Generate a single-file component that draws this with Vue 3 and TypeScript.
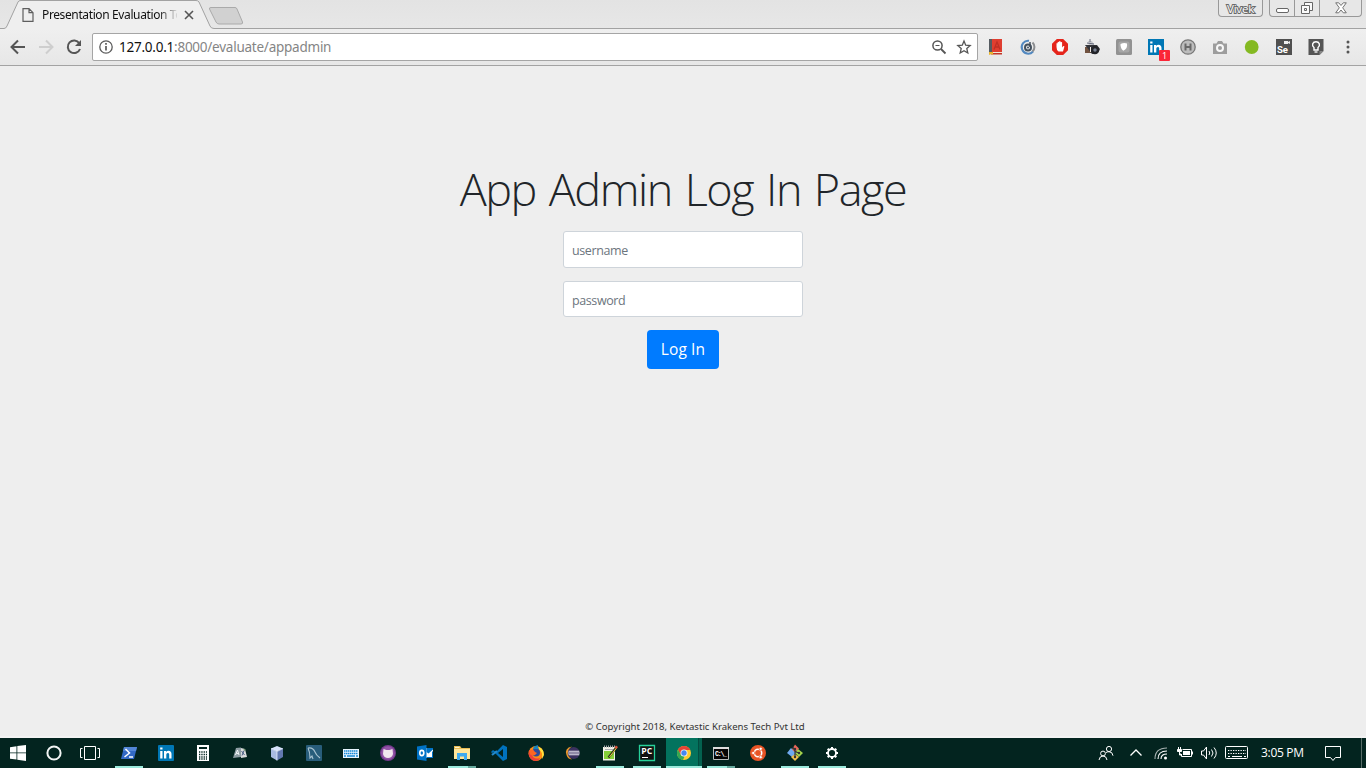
<script setup lang="ts">
import { ref } from 'vue'

interface Item {
  name: string
  art: string
  state?: 'open' | 'multi' | 'active'
}

const username = ref('')
const password = ref('')

const extensions: Item[] = [
  { name: 'Dictionary', art: '<path fill="#555b60" d="M1 0h3v14H1z"/><path fill="#df3e30" d="M4 0h10v13H4z"/><path d="M6 10.500 9 3l3 7.500M7 8h4" fill="none" stroke="#bf2f24" stroke-width="1.300"/><path fill="#f0e7d8" d="M3 13h11v1H3z"/><path fill="#c03528" d="M3 14h11v1.500H3z"/><path fill="#eab52c" d="M1 13h4v3l-1.500-1L1 16z"/>' },
  { name: 'Orbit', art: '<path d="M9 1.700A6.500 6.500 0 1 0 13 12.500" fill="none" stroke="#5288bf" stroke-width="2"/><path d="M12.500 3.500a6.200 6.200 0 0 1 0 9" fill="none" stroke="#8b8d90" stroke-width="2"/><circle cx="8" cy="8.500" r="3" fill="#e8eaee" stroke="#44515e" stroke-width="2"/><circle cx="8" cy="8.500" r="1" fill="#44515e"/><path d="M10 3v5" stroke="#44515e" stroke-width="1.500"/>' },
  { name: 'Blocker', art: '<path fill="#e5251b" d="M4.800 0h6.400L16 4.800v6.400L11.200 16H4.800L0 11.200V4.800z"/><path fill="#fff" d="M4.500 8V4.500q.5-.8 1.100 0V3.200q.8-.8 1.500 0V2.500q.7-.8 1.500 0v.8q.8-.8 1.500 0V8.500l1-1.300q1-.7 1.300.2L11 12.500H6.500q-2-1-2-4.500z"/>' },
  { name: 'Binoculars', art: '<path fill="#c6c7cb" d="M4 2h4l3 5H5z"/><path fill="#725340" d="M1 8h6v6H1z"/><path fill="#33343a" d="M1 6h6l6 0 3 4-2 4-6 1z"/><circle cx="11" cy="11" r="4.200" fill="#232429"/><circle cx="11" cy="11" r="1.700" fill="#788092"/><path d="M6 0v3M3 4l7 1" stroke="#666b7e"/><path fill="#f0e9e4" d="M6 8h1v5H6z"/>' },
  { name: 'Shield', art: '<rect width="16" height="16" rx="1.500" fill="#929292"/><rect x="2.500" y="2.500" width="11" height="11" rx="2" fill="#a6a6a6"/><path d="M4.500 5Q8 3.500 11 4.500q.8 5.500-3.700 7.200Q4.300 9.500 4.500 5z" fill="#fff"/>' },
  { name: 'LinkedIn', art: '<path fill="#0077b5" d="M0 0h16v16H0z"/><path fill="#fff" d="M2.200 6h2.300v7.500H2.200zM2.200 2.500h2.300v2H2.200zM6 6h2.200v1Q9 5.800 10.500 5.800 13.500 6 13.500 9v4.500h-2.300V9.300Q11 7.900 9.800 7.900 8.300 8 8.300 9.500v4H6z"/>' },
  { name: 'H', art: '<circle cx="8" cy="8" r="7.200" fill="#bcbcbc" stroke="#777" stroke-width="1.300"/><path d="M5.500 4.500v7M10.500 4.500v7M5 8h6" stroke="#686868" stroke-width="2"/>' },
  { name: 'Camera', art: '<path fill="#9d9d9d" d="M1 4.500h3.500L6 2h4l1.500 2.500H15V15H1z"/><circle cx="8" cy="9" r="3" fill="#9d9d9d" stroke="#f8f8f8" stroke-width="2"/>' },
  { name: 'Green', art: '<circle cx="7.700" cy="8" r="6.900" fill="#84b922"/>' },
  { name: 'Selenium', art: '<path fill="#505050" d="M0 0h16v16H0z"/><path fill="#eee" d="M8 2h4v3H8zM12 3l2-1v3l-2-1z"/><text x="1" y="14" font-size="9.500" font-family="Roboto" font-weight="700" fill="#fff">Se</text>' },
  { name: 'Bulb', art: '<path fill="#555" d="M.500 0h15v12l-4 4H.500z"/><path fill="#888" d="M11.500 12h4l-4 4z"/><path d="M6 8.500Q4 7 4.700 4.700 5.500 2.700 8 2.700q2.500 0 3.300 2Q12 7 10 8.500V11H6z" fill="#555" stroke="#fff" stroke-width="1.400"/><path d="M6.500 13h3" stroke="#fff" stroke-width="1.300"/>' },
]

const system: Item[] = [
  { name: 'Start', art: '<path fill="#fff" d="M0 2.200 6.500 1.300v6.200H0zM7.300 1.100 16 0v7.500H7.300zM0 8.300h6.500v6.300L0 13.700zM7.300 8.300H16V16l-8.700-1.200z"/>' },
  { name: 'Cortana', art: '<circle cx="8" cy="8" r="6.600" fill="none" stroke="#f2f5f4" stroke-width="2"/>' },
  { name: 'Task View', art: '<path d="M2.500 1.500h11v13h-11zM.500 3.500h-2v9h2M15.500 3.500h2v9h-2" fill="none" stroke="#fff"/>' },
]

const apps: Item[] = [
  { name: 'PowerShell', state: 'open', art: '<path fill="#3269c5" d="M3 2h13l-3 12H0z"/><path fill="#5386d7" d="M3 2h13l-1 4H2z"/><path d="m4.500 4 4 4-5 4M8 12h4" fill="none" stroke="#fff" stroke-width="1.500"/>' },
  { name: 'LinkedIn', art: '<rect width="16" height="16" rx="1" fill="#0077b5"/><path fill="#fff" d="M2.200 6h2.300v7.500H2.200zM2.200 2.500h2.300v2H2.200zM6 6h2.200v1Q9 5.800 10.500 5.800 13.500 6 13.500 9v4.500h-2.300V9.300Q11 7.900 9.800 7.900 8.300 8 8.300 9.500v4H6z"/>' },
  { name: 'Calculator', art: '<path fill="#fff" d="M2 0h12v16H2z"/><path fill="#03241f" d="M4 2h8v2H4z"/><path d="M4 7h8M4 9.500h8M4 12h8M4 14h8" stroke="#03241f" stroke-width="1.300" stroke-dasharray="1.300 1"/>' },
  { name: 'Translator', art: '<path fill="#8f9ea4" d="m4 3 5-.500V12l-8 1z"/><path fill="#d9dbdc" d="m9 3 4 1 2 8-6 1z"/><path d="m3.500 10 2-5 1.500 5M4.500 8.500h2" fill="none" stroke="#f3f6f8"/><path d="M9.500 6l3 4M12 5.500l-2 5" fill="none" stroke="#4b5f85"/><path fill="#709469" d="m11 3.500 2.500 1-.5 2z"/>' },
  { name: 'VirtualBox', art: '<path fill="#d7e3fb" d="m8 1 6 2.500-6 3-6-3z"/><path fill="#a9bbe2" d="m2 3.500 6 3v9l-6-3.500z"/><path fill="#6279b0" d="m14 3.500-6 3v9l6-3.500z"/><path d="m2 3.500 6 3 6-3M8 6.500v9" fill="none" stroke="#e7efff" stroke-width=".8"/>' },
  { name: 'MySQL', art: '<rect width="16" height="16" rx="1" fill="#285d7b"/><path d="M2 3q5-1 7 4 1 3 5 6M2 3q2 4 2 10l2-2 1 3" fill="none" stroke="#aac4d2" stroke-width="1.100"/>' },
  { name: 'Keyboard', art: '<path fill="#e8f5ff" d="M0 4h16v9H0z"/><path stroke="#1689d8" stroke-width="1.600" stroke-dasharray="1.500 .5" d="M1 6h14M1 8.500h14"/><path stroke="#1689d8" stroke-width="1.500" d="M1 11h2M4 11h8M13 11h2"/>' },
  { name: 'GitHub', art: '<circle cx="8" cy="8" r="8" fill="#74398d"/><circle cx="8" cy="8" r="6.800" fill="#9253a7"/><path d="m3.500 4 3 1h3l3-1 .5 5q-1 4-5 4T3 9z" fill="#f1e7ef"/>' },
  { name: 'Outlook', art: '<path fill="#fff" d="M9 3h7v10H9z"/><path fill="#0072c6" d="M0 1.500 9.500 0v16L0 14.500z"/><path fill="#0072c6" d="M9.500 3H16v1.500l-4.500 4-2-1.500zM9.500 12H15V7l1-1v7H9.500z"/><ellipse cx="4.800" cy="8" rx="2" ry="2.600" fill="none" stroke="#fff" stroke-width="1.600"/>' },
  { name: 'Explorer', state: 'multi', art: '<path fill="#e9bd55" d="M0 1h6l1.500 2H16v10H0z"/><path fill="#ffe69a" d="M0 4h16v10H0z"/><path fill="#3eaaf0" d="M3 8h10v7h-3v-3.500H6V15H3z"/><path fill="#fff5cb" d="M1 2h4.500v1H1z"/>' },
  { name: 'VS Code', art: '<path fill="#0072bd" d="m12 0 4 2v12l-4 2-9-9-2 1-1-1 2-2 3 2zM12 4 7 8l5 4z" fill-rule="evenodd"/><path d="m1 10 5-4" stroke="#2489ca" stroke-width="2.200"/>' },
  { name: 'Firefox', art: '<circle cx="8" cy="8.500" r="7.500" fill="#ff8b16"/><path fill="#ef3f39" d="M1 5q-2 9 6 11 4 0 5-3-6 2-8-3l-1-4z"/><path fill="#ffe23d" d="M11 2q5 2 5 8l-2 4q1-8-4-10z"/><circle cx="8" cy="7.500" r="4" fill="#304b99"/><path d="M1 6q4-3 6 1l2 1-2 2q-5 2-6-4" fill="#ff6523"/><path d="M5 4q0-3 5-4-1 2 1 4z" fill="#1685bd"/>' },
  { name: 'Eclipse', art: '<circle cx="8.700" cy="8" r="6" fill="#3b315f"/><path d="M7 1.500Q-1 3 1.500 10q1 4 5.500 4.500Q2 11 2.800 7.500 3 4 7 1.500" fill="#ef982d"/><path d="M3.500 6.200h10.800M3 8h11.700M3.500 9.800h10.800" stroke="#e8e5f0" stroke-width="1.100"/>' },
  { name: 'Notepad++', state: 'open', art: '<path fill="#f2f3e7" d="M1 2h12v13.500H1z"/><path d="M2 1.500h11" stroke="#a2a3aa" stroke-width="2" stroke-dasharray="1 1"/><path d="M3 4.500h8" stroke="#a9adb2"/><path fill="#85cf38" d="M2 6h10v8H2z"/><path d="m6.500 12.500 7-9" stroke="#31391c" stroke-width="2.200"/><path d="m7.500 12 7-9" stroke="#ebcf47"/><path d="m12.500 2.500 1.500-2 2 1.500-1.500 2z" fill="#d85338"/>' },
  { name: 'PyCharm', state: 'open', art: '<path d="M.500.500h15v15H.500z" fill="#111" stroke="#27d29a" stroke-width="1.300"/><text x="2.300" y="8.900" font-family="Open Sans" font-size="8.500" font-weight="700" fill="#fff" textLength="11" lengthAdjust="spacingAndGlyphs">PC</text><path stroke="#fff" d="M3 12.500h6"/>' },
  { name: 'Chrome', state: 'active', art: '<circle cx="8" cy="8" r="7" fill="#ffca2d"/><path fill="#e84335" d="M1.900 4.500Q4 1 8 1q4.500 0 6.300 4H8L4.700 9.900z"/><path fill="#34a853" d="M1.900 4.500 5 10l3.500 1.400L7 15q-5.500-.7-6-6.500 0-2 .9-4z"/><circle cx="8" cy="8" r="3.500" fill="#f5f5f2"/><circle cx="8" cy="8" r="2.700" fill="#4587ef"/>' },
  { name: 'Command Prompt', state: 'multi', art: '<path fill="#050505" stroke="#b9bdbc" d="M.500 2.500h15v12H.500z"/><path stroke="#ddd" stroke-width="2" d="M0 3h16"/><text x="2" y="11" font-family="Liberation Mono" font-size="6.500" font-weight="700" fill="#fff" textLength="12">C:\\_</text>' },
  { name: 'Ubuntu', art: '<circle cx="8" cy="8" r="8" fill="#e95425"/><circle cx="8" cy="8" r="3.700" fill="none" stroke="#fff" stroke-width="1.600"/><g fill="#fff" stroke="#e95425" stroke-width=".7"><circle cx="3.200" cy="8" r="1.600"/><circle cx="10.700" cy="3.800" r="1.600"/><circle cx="10.700" cy="12.200" r="1.600"/></g>' },
  { name: 'Git', state: 'open', art: '<path fill="#70a9ef" d="m4 3 5 5-4 4-5-4z"/><path fill="#e8675b" d="m8-.500 4 4-4 4-3-3z"/><path fill="#a5d34c" d="m11 4 5 4-4 4-4-4z"/><path fill="#f1bf4d" d="m8 9 4 3-4 4-4-4z"/><path d="M6 2q1 5 6 6M8 5v8" fill="none" stroke="#31383c" stroke-width="1.200"/><circle cx="8" cy="4" r="1.200" fill="#333"/><circle cx="12" cy="8" r="1.200" fill="#333"/><circle cx="8" cy="12" r="1.200" fill="#333"/>' },
  { name: 'Settings', state: 'open', art: '<circle cx="8" cy="8" r="4" fill="none" stroke="#fff" stroke-width="1.800"/><path d="M8 4V2M8 12v2M4 8H2M12 8h2M5.200 5.200 3.700 3.700M10.800 10.800l1.500 1.500M10.800 5.200l1.500-1.500M5.200 10.800l-1.500 1.500" stroke="#fff" stroke-width="2"/>' },
]

const tray: Item[] = [
  { name: 'People', art: '<circle cx="11" cy="4" r="2.600"/><circle cx="5" cy="8.500" r="2.400"/><path d="M1 15q.500-4 4-4t4 4M8 7.500Q9.500 6.700 11 6.700q3.500 0 4 4"/>' },
  { name: 'Show hidden icons', art: '<path stroke-width="1.300" d="m2.500 10.500 5.500-5.500 5.500 5.500"/>' },
  { name: 'Network', art: '<g stroke-width="1.100"><path d="M2 14Q2 3 14 3" opacity=".65"/><path d="M5 14Q5 6 14 6"/><path d="M8 14q0-5 6-5"/></g><circle cx="12.500" cy="13" r="1.500" fill="#fff" stroke="none"/>' },
  { name: 'Battery', art: '<path d="M5.500 4.500h9v7h-10V9M15.500 6.500v3"/><path fill="#fff" stroke="none" d="M6 6h7v4H6z"/><path fill="#fff" d="M.500 4.500h4v2h-4zM1.500 2v2M3.500 2v2M2.500 7v3h2"/>' },
  { name: 'Volume', art: '<path d="M.500 6h2l3-4v12l-3-4h-2zM8 6q1.500 2 0 4M10.500 4.500q3 3.500 0 7M13 2.500q4.500 5.500 0 11"/>' },
]
</script>

<template>
  <div class="screen">
    <header class="tabstrip">
      <svg class="tab-lines" width="1366" height="29" viewBox="0 0 1366 29" fill="none" aria-hidden="true">
        <path d="M0 29V28.500H4Q6 28.500 7 26L18 2Q18.500.500 21 .500H196Q198 .500 199 2L210 26Q211 28.500 214 28.500H1366V29z" fill="#efefef" />
        <path d="M0 28.500H4Q6 28.500 7 26L18 2Q18.500.500 21 .500H196Q198 .500 199 2L210 26Q211 28.500 214 28.500H1366" stroke="#a2a2a2" />
        <path d="M211 7.500H235Q236.500 7.500 237 9L242.500 22Q243 24 241 24H219Q217 24 216 22L209.500 9Q209 7.500 211 7.500z" fill="#d1d1d1" stroke="#aaa" />
      </svg>
      <div class="tab">
        <svg class="page-icon" width="12" height="14" viewBox="0 0 12 14" fill="none" stroke="#5e5e5e" stroke-width="1.200"><path d="M1 .700h6l4 4v8.600H1zM7 .700v4h4" /></svg>
        <span class="tab-title">Presentation Evaluation Tool</span>
        <svg width="10" height="10" viewBox="0 0 10 10" stroke="#555" stroke-width="1.600"><path d="m1 1 8 8M9 1 1 9" /></svg>
      </div>
      <div class="window-controls">
        <div class="profile">Vivek</div>
        <div class="buttons">
          <span><svg width="13" height="8" viewBox="0 0 13 8"><rect x=".500" y="2.500" width="12" height="4" rx="1.500" fill="#fff" stroke="#666" /></svg></span>
          <span><svg width="14" height="14" viewBox="0 0 14 14" fill="#fafafa" stroke="#666"><path d="M4.500 1.500h8v8h-8z" /><path d="M1.500 4.500h8v8h-8z" /><path d="M4.500 7.500h2v2h-2z" /></svg></span>
          <span><svg width="12" height="12" viewBox="0 0 12 12" fill="#fff" stroke="#737373"><path d="M.700.800h3L6 3.500 8.300.800h3L7.700 5.800l3.600 5h-3L6 8l-2.300 2.800h-3l3.600-5z" /></svg></span>
        </div>
      </div>
    </header>

    <nav class="toolbar">
      <svg class="nav-icon" viewBox="0 0 16 16" fill="none" stroke="#555" stroke-width="2"><path d="M15 8H2M8 1.500 1.500 8 8 14.500" /></svg>
      <svg class="nav-icon" viewBox="0 0 16 16" fill="none" stroke="#cecece" stroke-width="2"><path d="M1 8h13M8 1.500 14.500 8 8 14.500" /></svg>
      <svg class="nav-icon reload" viewBox="0 0 16 16" fill="none" stroke="#555" stroke-width="2"><path d="M13.300 4.200A6.300 6.300 0 1 0 14 10" /><path fill="#555" stroke="none" d="M15 1v6H9z" /></svg>
      <div class="address">
        <svg width="14" height="14" viewBox="0 0 14 14" fill="none" stroke="#5b5b5b" stroke-width="1.300"><circle cx="7" cy="7" r="6.200" /><path stroke-width="1.700" d="M7 6v4.500M7 3v1.700" /></svg>
        <span class="url"><b>127.0.0.1</b>:8000/evaluate/appadmin</span>
        <svg class="magnifier" width="14" height="14" viewBox="0 0 14 14" fill="none" stroke="#555" stroke-width="1.500"><circle cx="5.500" cy="5.500" r="4.600" /><path d="m9 9 4.500 4.500" stroke-width="1.800" /><path d="M3.500 5.500h4" stroke-width="1" /></svg>
        <svg width="14" height="14" viewBox="0 0 14 14" fill="none" stroke="#555" stroke-width="1.300"><path d="m7 1 1.700 4.200 4.500.4-3.400 3 1 4.400L7 10.700 3.200 13l1-4.400-3.400-3 4.500-.4z" /></svg>
      </div>
      <div class="extensions">
        <span v-for="item in extensions" :key="item.name" class="extension">
          <svg width="16" height="16" viewBox="0 0 16 16" v-html="item.art"></svg>
          <i v-if="item.name === 'LinkedIn'" class="count">1</i>
        </span>
      </div>
      <svg class="kebab" width="4" height="14" viewBox="0 0 4 14" fill="#555"><circle cx="2" cy="2" r="1.500" /><circle cx="2" cy="7" r="1.500" /><circle cx="2" cy="12" r="1.500" /></svg>
    </nav>

    <main class="page">
      <h1>App Admin Log In Page</h1>
      <form @submit.prevent>
        <input v-model="username" class="field" type="text" placeholder="username" />
        <input v-model="password" class="field second" type="password" placeholder="password" />
        <button type="submit">Log In</button>
      </form>
      <footer>© Copyright 2018, Kevtastic Krakens Tech Pvt Ltd</footer>
    </main>

    <div class="taskbar">
      <div class="system">
        <span v-for="item in system" :key="item.name"><svg width="16" height="16" viewBox="0 0 16 16" v-html="item.art"></svg></span>
      </div>
      <div class="apps">
        <span v-for="item in apps" :key="item.name" class="app" :class="item.state">
          <svg width="16" height="16" viewBox="0 0 16 16" v-html="item.art"></svg>
        </span>
      </div>
      <div class="tray">
        <svg v-for="item in tray" :key="item.name" width="16" height="16" viewBox="0 0 16 16" fill="none" stroke="#fff" v-html="item.art"></svg>
        <svg class="keyboard" width="24" height="14" viewBox="0 0 24 14" fill="none" stroke="#fff"><rect x=".500" y=".500" width="22" height="12" rx="1" /><path stroke-dasharray="1.300 1.200" d="M3 4.500h18M3 7.500h18" /><path d="M3 10.500h2M7 10.500h10M19 10.500h2" /></svg>
        <time>3:05 PM</time>
        <svg class="notice" width="17" height="17" viewBox="0 0 17 17" fill="none" stroke="#fff"><path d="M.500 1.500h15v11h-5L8 15.500l-2.500-3h-5z" /></svg>
        <i class="show-desktop"></i>
      </div>
    </div>
  </div>
</template>

<style>
html, body { margin: 0; overflow: hidden; }
</style>

<style scoped>
* { box-sizing: border-box; }
svg { display: block; flex: none; overflow: visible; }
.screen { width: 1366px; height: 768px; display: flex; flex-direction: column; background: #eee; font-family: "Open Sans", "Noto Sans", sans-serif; }
.tabstrip { position: relative; height: 29px; flex: none; display: flex; justify-content: space-between; background: linear-gradient(#e3e3e3, #e7e7e7); }
.tab-lines { position: absolute; inset: 0; }
.tab { position: relative; display: flex; align-items: center; height: 30px; padding-left: 22px; }
.page-icon { margin-right: 8px; }
.tab-title { width: 135px; margin-right: 7px; overflow: hidden; white-space: nowrap; font: 12px/18px "Noto Sans", sans-serif; letter-spacing: -.38px; color: #111; -webkit-mask-image: linear-gradient(90deg, #000 116px, transparent 137px); mask-image: linear-gradient(90deg, #000 116px, transparent 137px); }
.window-controls { position: relative; display: flex; gap: 6px; height: 17px; padding-right: 4px; }
.profile, .buttons { border: 1px solid #989898; border-top: 0; border-radius: 0 0 4px 4px; background: #e7e7e7; }
.profile { width: 45px; text-align: center; font: 11.500px/17px "Open Sans", sans-serif; letter-spacing: -.2px; color: #fff; -webkit-text-stroke: 2px #6a6a6a; paint-order: stroke fill; }
.buttons { width: 93px; display: flex; }
.buttons span { display: flex; align-items: center; justify-content: center; width: 25px; }
.buttons span + span { border-left: 1px solid #989898; }
.buttons span:first-child { padding-top: 4px; width: 24px; }
.buttons span:last-child { width: 42px; }
.toolbar { height: 37px; flex: none; display: flex; align-items: center; padding-left: 10px; border-bottom: 1px solid #a3a3a3; background: linear-gradient(#efefef, #e7e7e7); }
.nav-icon { width: 16px; height: 16px; margin-right: 12px; }
.reload { margin-right: 10px; }
.address { width: 886px; height: 28px; display: flex; align-items: center; padding: 0 6px; border: 1px solid #a5a5a5; border-radius: 2px; background: #fff; }
.url { flex: 1; margin-left: 6px; font: 13.5px/24px "Noto Sans", sans-serif; letter-spacing: -.24px; color: #858585; }
.url b { font-weight: 400; color: #111; }
.magnifier { margin-right: 11px; }
.extensions { display: flex; margin-left: 10px; gap: 16px; }
.extension { position: relative; }
.count { position: absolute; left: 11px; top: 11px; width: 11px; height: 11px; border-radius: 1px; background: #fb2638; color: #fff; font: normal 9px/11px "Open Sans", sans-serif; text-align: center; }
.kebab { margin-left: 22px; }
.page { flex: 1; display: flex; flex-direction: column; align-items: center; border-bottom: 2px solid #f3f3f3; }
h1 { margin: 94px 0 0; font-size: 45px; line-height: 58px; font-weight: 300; letter-spacing: -1.45px; word-spacing: 2.600px; color: #212529; white-space: nowrap; }
form { display: flex; flex-direction: column; align-items: center; margin-top: 13px; }
.field { width: 240px; height: 37px; padding: 2px 8px 0; border: 1px solid #ced4da; border-radius: 3px; background: #fff; font: 12.500px "Open Sans", sans-serif; letter-spacing: -.4px; color: #495057; outline: 0; }
.field::placeholder { color: #6c757d; opacity: 1; }
.second { height: 36px; margin-top: 13px; }
button { width: 72px; height: 39px; margin-top: 13px; padding: 0 0 1px; border: 0; border-radius: 4px; background: #007bff; color: #fff; font: 15.500px "Open Sans", sans-serif; letter-spacing: .1px; }
footer { margin-top: auto; padding: 0 0 2px 24px; font: 9.600px/15px "Noto Sans", sans-serif; color: #333; white-space: nowrap; }
.taskbar { height: 30px; flex: none; display: flex; background: #03241f; }
.system, .apps, .tray { display: flex; align-items: center; }
.system span { width: 36px; display: flex; justify-content: center; }
.apps { margin-left: 2px; }
.app { position: relative; width: 37px; height: 30px; display: flex; align-items: center; justify-content: center; }
.open::after, .multi::after { content: ""; position: absolute; bottom: 0; left: 5px; width: 28px; height: 2px; background: #9beadc; }
.multi::after { background: linear-gradient(90deg, #9beadc 20px, #66a99d 20px); }
.active { width: 36px; margin-left: 1px; border-bottom: 2px solid #9beadc; background: linear-gradient(90deg, #03735e 32px, #034c40 32px, #034c40 33px, #03614f 33px); padding-top: 2px; }
.tray { margin-left: auto; height: 30px; color: #fff; }
.tray > svg { margin-right: 8px; }
.tray > svg:nth-child(1) { margin-right: 14px; }
.tray > svg:nth-child(2) { margin-right: 9px; }
.tray > .keyboard { margin-right: 12px; }
time { width: 44px; font: 12px/30px "Open Sans", sans-serif; letter-spacing: -.3px; white-space: nowrap; }
.tray > .notice { margin: 0 19px 0 20px; }
.show-desktop { width: 5px; height: 30px; border-left: 1px solid #576c67; }
</style>
